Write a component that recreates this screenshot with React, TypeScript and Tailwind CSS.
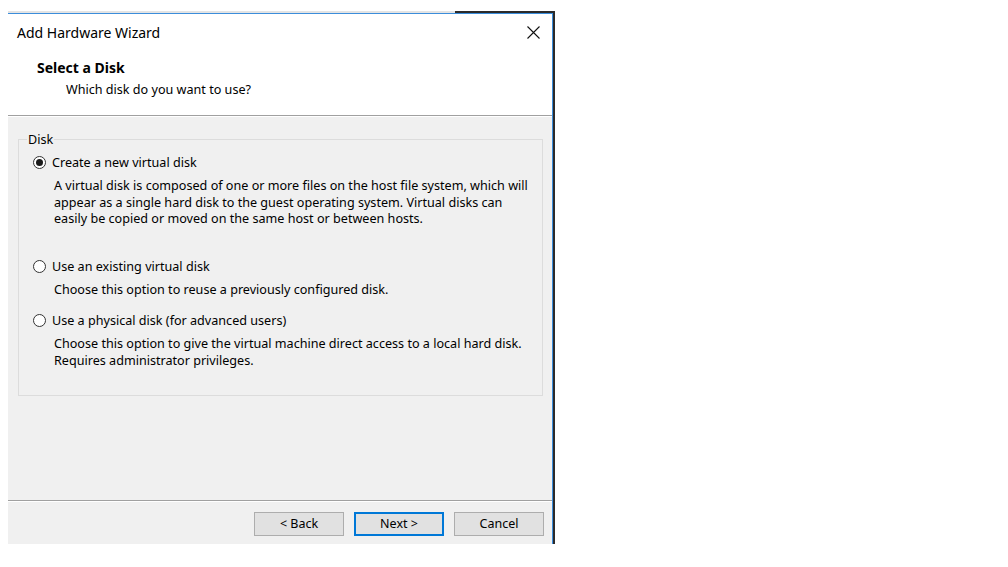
import React, { useState } from "react";

type DiskChoice = "new" | "existing" | "physical";

const options: { id: DiskChoice; label: string; lines: string[] }[] = [
  {
    id: "new",
    label: "Create a new virtual disk",
    lines: [
      "A virtual disk is composed of one or more files on the host file system, which will",
      "appear as a single hard disk to the guest operating system. Virtual disks can",
      "easily be copied or moved on the same host or between hosts.",
    ],
  },
  {
    id: "existing",
    label: "Use an existing virtual disk",
    lines: ["Choose this option to reuse a previously configured disk."],
  },
  {
    id: "physical",
    label: "Use a physical disk (for advanced users)",
    lines: [
      "Choose this option to give the virtual machine direct access to a local hard disk.",
      "Requires administrator privileges.",
    ],
  },
];

const RadioDot = ({ checked }: { checked: boolean }) => (
  <span className="flex h-[13px] w-[13px] shrink-0 items-center justify-center rounded-full border border-[#333333] bg-white">
    {checked && <span className="h-[7px] w-[7px] rounded-full bg-[#1a1a1a]" />}
  </span>
);

const CloseIcon = () => (
  <svg width="13" height="13" viewBox="0 0 13 13" className="block">
    <path d="M0.5 0.5 L12.5 12.5 M12.5 0.5 L0.5 12.5" stroke="#111" strokeWidth="1.1" fill="none" />
  </svg>
);

const WizardButton = ({ children, primary = false }: { children: React.ReactNode; primary?: boolean }) => (
  <button
    className={`h-[24px] w-[90px] bg-[#e1e1e1] text-[12.5px] leading-none text-black ${
      primary ? "border-2 border-[#0078d7]" : "border border-[#adadad]"
    }`}
  >
    {children}
  </button>
);

export default function App() {
  const [choice, setChoice] = useState<DiskChoice>("new");

  return (
    <div className="min-h-[567px] w-full bg-white font-['Noto_Sans',sans-serif] text-black">
      <div className="ml-[8px] w-[547px] pt-[11px]">
        {/* frame edge of the window behind */}
        <div className="flex h-[2px]">
          <div className="w-[447px] bg-[#e4e4e4]" />
          <div className="flex-1 bg-[#2b2b2b]" />
        </div>

        <div className="flex">
          <div className="flex h-[531px] w-[545px] flex-col border-t border-r border-[#3b8ddb] bg-[#f0f0f0]">
            {/* title bar + page header */}
            <div className="h-[101px] bg-white">
              <div className="flex h-[37px] items-center justify-between pl-[9px] pr-[12px]">
                <span className="text-[14px] leading-[20px]">Add Hardware Wizard</span>
                <CloseIcon />
              </div>
              <div className="mt-[8px] pl-[29px] text-[14px] font-bold leading-[18px]">Select a Disk</div>
              <div className="mt-[4px] pl-[58px] text-[12.6px] leading-[17px]">Which disk do you want to use?</div>
            </div>
            <div className="h-[1px] bg-[#a0a0a0]" />
            <div className="h-[1px] bg-white" />

            <div className="h-[383px] pt-[14px] pl-[10px] text-[12.6px] leading-[16.5px]">
              <fieldset className="h-[265px] w-[524px] border border-[#dcdcdc] px-[14px]">
                <legend className="ml-[-6px] px-[1px] leading-[17px]">Disk</legend>
                <div className="flex flex-col pt-[6px]">
                  {options.map((opt, i) => (
                    <div key={opt.id} className={i === 1 ? "mt-[30px]" : i === 2 ? "mt-[14px]" : ""}>
                      <label
                        className="flex cursor-default items-center gap-[6px] leading-[17px]"
                        onClick={() => setChoice(opt.id)}
                      >
                        <RadioDot checked={choice === opt.id} />
                        <span>{opt.label}</span>
                      </label>
                      <div className="mt-[7px] pl-[21px]">
                        {opt.lines.map((line) => (
                          <div key={line} className="whitespace-nowrap">
                            {line}
                          </div>
                        ))}
                      </div>
                    </div>
                  ))}
                </div>
              </fieldset>
            </div>

            <div className="h-[1px] bg-[#a0a0a0]" />
            <div className="h-[1px] bg-white" />
            <div className="flex justify-end gap-[10px] pt-[10px] pr-[8px]">
              <WizardButton>&lt; Back</WizardButton>
              <WizardButton primary>Next &gt;</WizardButton>
              <WizardButton>Cancel</WizardButton>
            </div>
          </div>
          <div className="w-[2px] bg-[#2b2b2b]" />
        </div>
      </div>
    </div>
  );
}
